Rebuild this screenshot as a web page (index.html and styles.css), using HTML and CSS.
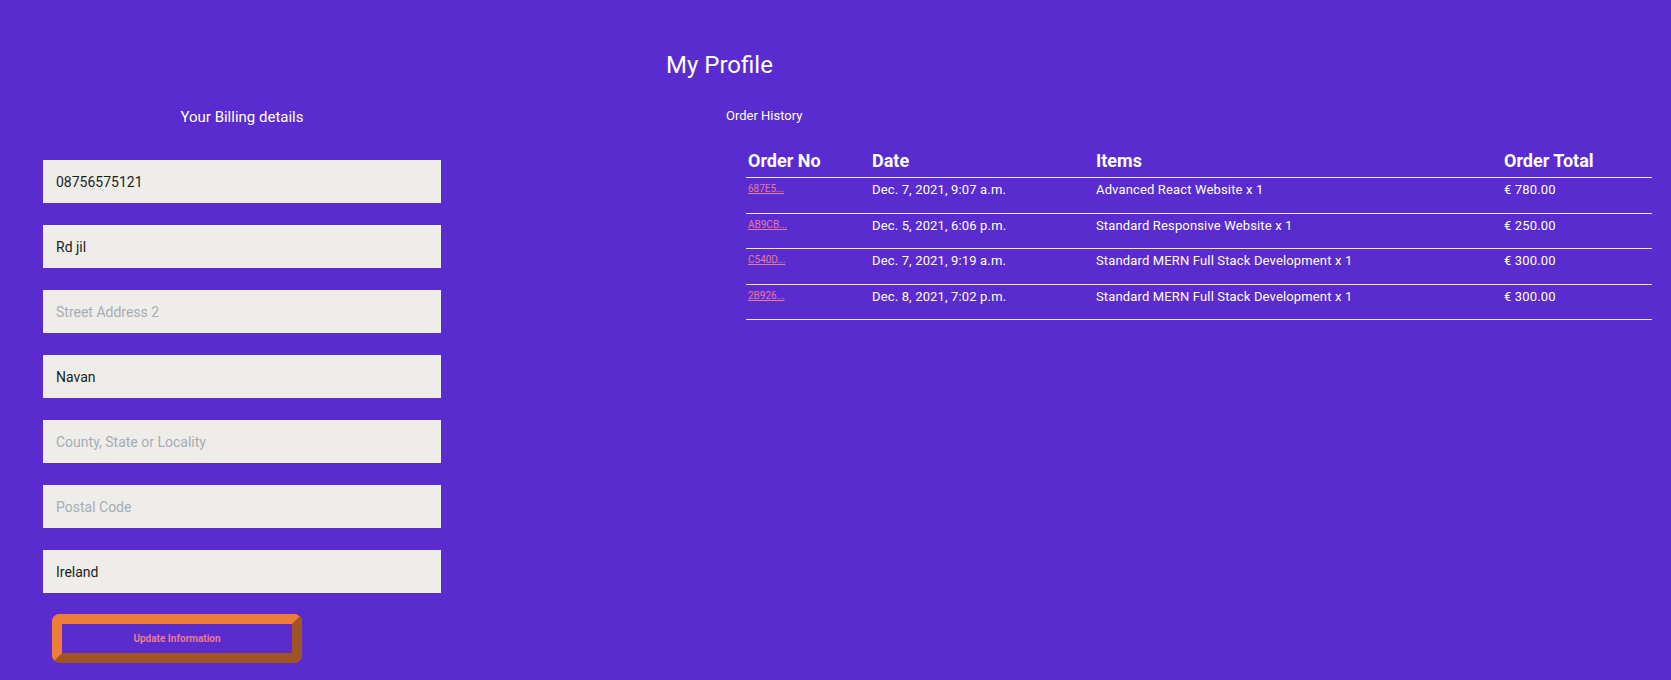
FILE: index.html
```html
<!DOCTYPE html>
<html lang="en">
<head>
<meta charset="utf-8">
<title>My Profile</title>
<link rel="stylesheet" href="styles.css">
</head>
<body>
<div class="page">
  <h1 class="page-title">My Profile</h1>
  <div class="main">
    <section class="billing">
      <h2 class="billing-title">Your Billing details</h2>
      <form class="billing-form">
        <input class="field" type="text" value="08756575121">
        <input class="field" type="text" value="Rd jil">
        <input class="field" type="text" placeholder="Street Address 2">
        <input class="field" type="text" value="Navan">
        <input class="field" type="text" placeholder="County, State or Locality">
        <input class="field" type="text" placeholder="Postal Code">
        <input class="field" type="text" value="Ireland">
        <button class="update-btn" type="button">Update Information</button>
      </form>
    </section>
    <section class="orders">
      <h3 class="orders-title">Order History</h3>
      <table class="orders-table">
        <colgroup>
          <col class="c-no"><col class="c-date"><col class="c-items"><col class="c-total">
        </colgroup>
        <thead>
          <tr><th>Order No</th><th>Date</th><th>Items</th><th>Order Total</th></tr>
        </thead>
        <tbody>
          <tr><td class="order-no"><a href="#">687E5...</a></td><td>Dec. 7, 2021, 9:07 a.m.</td><td>Advanced React Website x 1</td><td>€ 780.00</td></tr>
          <tr><td class="order-no"><a href="#">AB9CB...</a></td><td>Dec. 5, 2021, 6:06 p.m.</td><td>Standard Responsive Website x 1</td><td>€ 250.00</td></tr>
          <tr><td class="order-no"><a href="#">C540D...</a></td><td>Dec. 7, 2021, 9:19 a.m.</td><td>Standard MERN Full Stack Development x 1</td><td>€ 300.00</td></tr>
          <tr><td class="order-no"><a href="#">2B926...</a></td><td>Dec. 8, 2021, 7:02 p.m.</td><td>Standard MERN Full Stack Development x 1</td><td>€ 300.00</td></tr>
        </tbody>
      </table>
    </section>
  </div>
</div>
</body>
</html>
```
FILE: styles.css
```css
* { box-sizing: border-box; }
html, body {
  margin: 0;
  padding: 0;
  background: #5a2cd0;
  color: #ffffff;
  font-family: Roboto, "Noto Sans", Arial, sans-serif;
}
body { height: 680px; overflow: hidden; }
.page { padding-top: 51px; }
.page-title {
  margin: 0 0 0 666px;
  font-size: 24px;
  font-weight: 400;
  line-height: 29px;
}
.main { display: flex; align-items: flex-start; }
.billing {
  margin-left: 43px;
  width: 398px;
}
.billing-title {
  margin: 26px 0 32px;
  font-size: 15px;
  font-weight: 400;
  line-height: 22px;
  text-align: center;
}
.billing-form { display: flex; flex-direction: column; align-items: flex-start; }
.field {
  display: block;
  width: 398px;
  height: 43px;
  margin: 0 0 22px;
  padding: 0 13px;
  border: none;
  background: #eeede9;
  color: #1d1d1d;
  font-family: inherit;
  font-size: 14px;
  outline: none;
}
.field::placeholder { color: #a7acb5; }
.field:last-of-type { margin-bottom: 21px; }
.update-btn {
  margin-left: 9px;
  width: 250px;
  height: 49px;
  border: 10px solid;
  border-color: #ee7d3a #9e5424 #9e5424 #ee7d3a;
  border-radius: 8px;
  background: transparent;
  color: #ea7a8e;
  font-family: inherit;
  font-size: 10px;
  font-weight: 700;
  padding: 0;
}
.orders { margin-left: 285px; }
.orders-title {
  margin: 26px 0 22px;
  font-size: 13px;
  font-weight: 400;
  line-height: 19px;
}
.orders-table {
  margin-left: 20px;
  width: 906px;
  table-layout: fixed;
  border-collapse: collapse;
}
.c-no { width: 124px; }
.c-date { width: 224px; }
.c-items { width: 408px; }
.c-total { width: 150px; }
.orders-table th {
  text-align: left;
  font-size: 18px;
  font-weight: 700;
  line-height: 27px;
  padding: 0 2px 3px;
}
.orders-table tr { border-bottom: 1px solid #ece8fa; }
.orders-table td {
  vertical-align: top;
  font-size: 13px;
  line-height: 19.5px;
  padding: 2px 2px 13px;
  letter-spacing: 0.15px;
}
.orders-table td.order-no { font-size: 10px; padding: 1px 2px 14px; letter-spacing: 0; }
.order-no a { color: #e47a9c; text-decoration: underline; }
```
